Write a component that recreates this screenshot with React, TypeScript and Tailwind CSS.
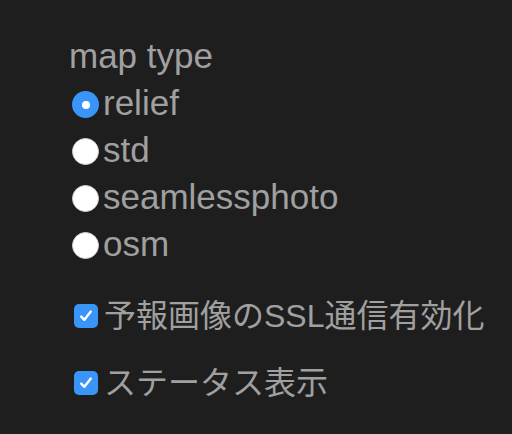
import { useState } from "react";

const mapTypes = ["relief", "std", "seamlessphoto", "osm"];

function Radio({ checked }: { checked: boolean }) {
  return checked ? (
    <span className="flex h-[27px] w-[27px] shrink-0 items-center justify-center rounded-full bg-[#3a95f8]">
      <span className="block h-[8px] w-[8px] rounded-full bg-white" />
    </span>
  ) : (
    <span className="block h-[27px] w-[27px] shrink-0 rounded-full border border-[#d0d0d0] bg-white" />
  );
}

function Check({ checked }: { checked: boolean }) {
  return (
    <span
      className={
        checked
          ? "flex h-[24px] w-[24px] shrink-0 items-center justify-center rounded-[5px] bg-[#3a95f8]"
          : "block h-[24px] w-[24px] shrink-0 rounded-[5px] bg-white"
      }
    >
      {checked && (
        <svg width="16" height="16" viewBox="0 0 16 16" fill="none">
          <path
            d="M3.2 8.6 L6.4 11.8 L12.8 3.6"
            stroke="white"
            strokeWidth="2.4"
            strokeLinecap="round"
            strokeLinejoin="round"
          />
        </svg>
      )}
    </span>
  );
}

export default function App() {
  const [mapType, setMapType] = useState("relief");
  const [ssl, setSsl] = useState(true);
  const [status, setStatus] = useState(true);

  return (
    <div className="min-h-[434px] bg-[#1e1e1e] pl-[69px] pt-[32px] font-['Liberation_Sans','Noto_Sans_CJK_JP',sans-serif] text-[#a0a0a0]">
      <div className="text-[35px] leading-[47px]">map type</div>

      {mapTypes.map((type) => (
        <div
          key={type}
          className="flex h-[47px] cursor-pointer items-center gap-[4px] pl-[3px] text-[35px]"
          onClick={() => setMapType(type)}
        >
          <span className="mt-[4px] flex">
            <Radio checked={mapType === type} />
          </span>
          <span className="leading-[47px]">{type}</span>
        </div>
      ))}

      <div
        className="mt-[29px] flex h-[40px] cursor-pointer items-center gap-[6px] pl-[5px] text-[32px]"
        onClick={() => setSsl(!ssl)}
      >
        <Check checked={ssl} />
        <span className="leading-[40px]">予報画像のSSL通信有効化</span>
      </div>

      <div
        className="mt-[27px] flex h-[40px] cursor-pointer items-center gap-[6px] pl-[5px] text-[32px]"
        onClick={() => setStatus(!status)}
      >
        <Check checked={status} />
        <span className="leading-[40px]">ステータス表示</span>
      </div>
    </div>
  );
}
